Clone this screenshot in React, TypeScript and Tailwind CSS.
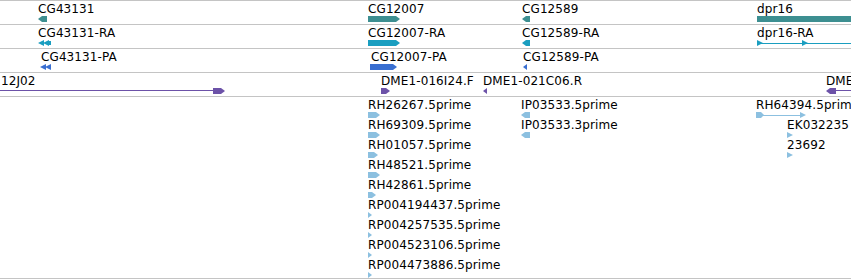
import React from 'react';

type Kind =
  | 'right'
  | 'left'
  | 'bar'
  | 'left2'
  | 'tipLeft'
  | 'tipRight'
  | 'lineRight'
  | 'lineLeft'
  | 'exons'
  | 'span';

interface Feature {
  label: string;
  x: number;
  labelOffset?: number;
  width: number;
  kind: Kind;
}

interface Column {
  x: number;
  items: (Feature | null)[];
}

const Glyph: React.FC<{ kind: Kind; width: number; color: string }> = ({ kind, width, color }) => {
  const w = width;
  let shape: React.ReactNode = null;

  switch (kind) {
    case 'right':
      shape = <polygon points={`0,0 ${w - 4},0 ${w},3 ${w - 4},6 0,6`} fill={color} />;
      break;
    case 'left':
      shape = <polygon points={`0,3 4,0 ${w},0 ${w},6 4,6`} fill={color} />;
      break;
    case 'bar':
      shape = <rect x={0} y={0} width={w} height={6} fill={color} />;
      break;
    case 'left2':
      shape = (
        <>
          <polygon points="0,3 6,0 6,6" fill={color} />
          <polygon points="5,3 11,0 11,6" fill={color} />
          <rect x={11} y={1} width={w - 11} height={4} fill={color} />
        </>
      );
      break;
    case 'tipLeft':
      shape = <polygon points={`0,3 ${w},0 ${w},6`} fill={color} />;
      break;
    case 'tipRight':
      shape = <polygon points={`0,0 ${w},3 0,6`} fill={color} />;
      break;
    case 'lineRight':
      shape = (
        <>
          <rect x={0} y={2} width={w - 12} height={1} fill={color} />
          <polygon points={`${w - 12},0 ${w - 4},0 ${w},3 ${w - 4},6 ${w - 12},6`} fill={color} />
        </>
      );
      break;
    case 'lineLeft':
      shape = (
        <>
          <polygon points="0,3 4,0 10,0 10,6 4,6" fill={color} />
          <rect x={10} y={2} width={w - 10} height={1} fill={color} />
        </>
      );
      break;
    case 'exons':
      shape = (
        <>
          <rect x={0} y={3} width={w} height={1} fill={color} />
          <polygon points="0,0 2,1 6,3 2,5 0,6" fill={color} />
          <polygon points="45,0 47,1 51,3 47,5 45,6" fill={color} />
        </>
      );
      break;
    case 'span':
      shape = (
        <>
          <polygon points="0,0 5,0 8,3 5,6 0,6" fill={color} />
          <rect x={7} y={3} width={w - 13} height={1} fill={color} />
          <polygon points={`${w - 6},0 ${w},3 ${w - 6},6`} fill={color} />
        </>
      );
      break;
  }

  return (
    <svg width={w} height={6} viewBox={`0 0 ${w} 6`} className="block overflow-visible">
      {shape}
    </svg>
  );
};

const FeatureBox: React.FC<{ feature: Feature; color: string }> = ({ feature, color }) => (
  <div className="flex flex-col">
    <div
      className="h-[14px] leading-[14px] whitespace-nowrap text-black tracking-[0.1px]"
      style={{ paddingLeft: feature.labelOffset ?? 0 }}
    >
      {feature.label}
    </div>
    <Glyph kind={feature.kind} width={feature.width} color={color} />
  </div>
);

const tracks: { color: string; features: Feature[] }[] = [
  {
    color: '#3d8f91',
    features: [
      { label: 'CG43131', x: 38, width: 9, kind: 'left' },
      { label: 'CG12007', x: 368, width: 32, kind: 'right' },
      { label: 'CG12589', x: 522, width: 8, kind: 'left' },
      { label: 'dpr16', x: 757, width: 100, kind: 'bar' },
    ],
  },
  {
    color: '#1a9ec0',
    features: [
      { label: 'CG43131-RA', x: 38, width: 13, kind: 'left2' },
      { label: 'CG12007-RA', x: 368, width: 32, kind: 'right' },
      { label: 'CG12589-RA', x: 522, width: 8, kind: 'left' },
      { label: 'dpr16-RA', x: 757, width: 100, kind: 'exons' },
    ],
  },
  {
    color: '#3a6fd1',
    features: [
      { label: 'CG43131-PA', x: 40, labelOffset: 1, width: 11, kind: 'left2' },
      { label: 'CG12007-PA', x: 370, labelOffset: 1, width: 27, kind: 'right' },
      { label: 'CG12589-PA', x: 523, width: 4, kind: 'tipLeft' },
    ],
  },
  {
    color: '#6c52a8',
    features: [
      { label: '12J02', x: 0, labelOffset: 1, width: 225, kind: 'lineRight' },
      { label: 'DME1-016I24.F', x: 381, width: 9, kind: 'right' },
      { label: 'DME1-021C06.R', x: 483, width: 4, kind: 'tipLeft' },
      { label: 'DME', x: 826, width: 40, kind: 'lineLeft' },
    ],
  },
];

// EST track: each column stacks its features, one per 20px row
const estColumns: Column[] = [
  {
    x: 368,
    items: [
      { label: 'RH26267.5prime', x: 368, width: 12, kind: 'right' },
      { label: 'RH69309.5prime', x: 368, width: 12, kind: 'right' },
      { label: 'RH01057.5prime', x: 368, width: 10, kind: 'right' },
      { label: 'RH48521.5prime', x: 368, width: 12, kind: 'right' },
      { label: 'RH42861.5prime', x: 368, width: 8, kind: 'right' },
      { label: 'RP004194437.5prime', x: 368, width: 4, kind: 'tipRight' },
      { label: 'RP004257535.5prime', x: 368, width: 4, kind: 'tipRight' },
      { label: 'RP004523106.5prime', x: 368, width: 4, kind: 'tipRight' },
      { label: 'RP004473886.5prime', x: 368, width: 4, kind: 'tipRight' },
    ],
  },
  {
    x: 521,
    items: [
      { label: 'IP03533.5prime', x: 521, width: 9, kind: 'left' },
      { label: 'IP03533.3prime', x: 521, width: 9, kind: 'left' },
    ],
  },
  {
    x: 756,
    items: [{ label: 'RH64394.5prime', x: 756, width: 50, kind: 'span' }],
  },
  {
    x: 787,
    items: [
      null,
      { label: 'EK032235', x: 787, width: 6, kind: 'tipRight' },
      { label: '23692', x: 787, width: 6, kind: 'tipRight' },
    ],
  },
];

const App: React.FC = () => {
  return (
    <div
      className="w-[851px] h-[280px] overflow-hidden bg-white text-[12px]"
      style={{ fontFamily: '"DejaVu Sans", "Liberation Sans", sans-serif' }}
    >
      {tracks.map((track, i) => (
        <div key={i} className="relative h-[24px] border-t border-[#c4c4c4]">
          {track.features.map((f) => (
            <div key={f.label} className="absolute top-[1px]" style={{ left: f.x }}>
              <FeatureBox feature={f} color={track.color} />
            </div>
          ))}
        </div>
      ))}

      {/* ESTs */}
      <div className="relative h-[183px] border-y border-[#c4c4c4]">
        {estColumns.map((col) => (
          <div key={col.x} className="absolute top-[1px] flex flex-col" style={{ left: col.x }}>
            {col.items.map((f, j) => (
              <div key={j} className="h-[20px]">
                {f && <FeatureBox feature={f} color="#8cc0e0" />}
              </div>
            ))}
          </div>
        ))}
      </div>
    </div>
  );
};

export default App;
